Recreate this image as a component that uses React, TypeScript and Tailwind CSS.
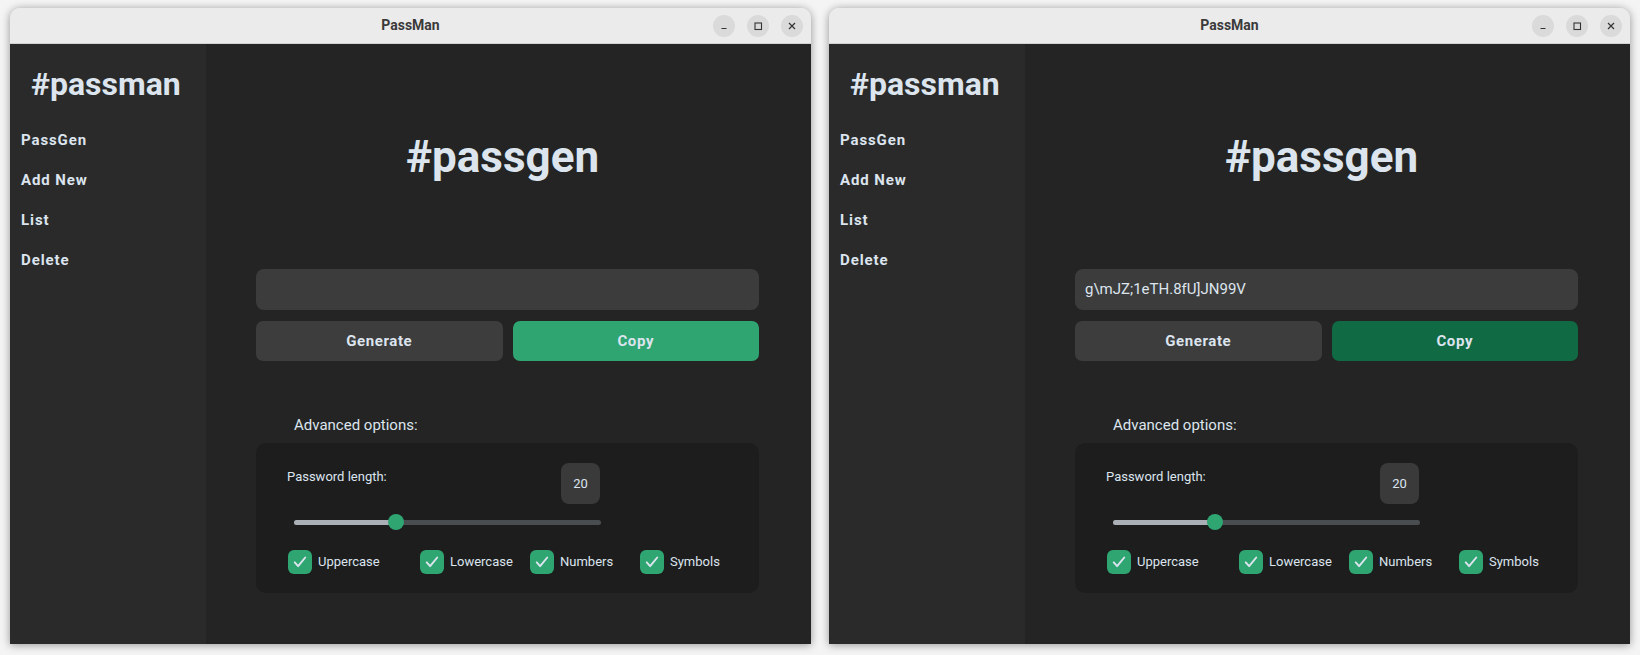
import React from 'react';

interface WindowProps {
  password: string;
  copyPressed?: boolean;
}

const CheckItem: React.FC<{ label: string; width: string }> = ({ label, width }) => (
  <div className={`flex items-center ${width}`}>
    <div className="w-[24px] h-[24px] rounded-[6px] bg-[#2fa572] flex items-center justify-center">
      <svg width="18" height="18" viewBox="0 0 24 24" fill="none">
        <path d="M5 12.5l4.5 5L19 6" stroke="#dce4ee" strokeWidth="2.6" strokeLinecap="round" strokeLinejoin="round" />
      </svg>
    </div>
    <span className="ml-[6px] text-[13px] text-[#dce4ee]">{label}</span>
  </div>
);

const WinButton: React.FC<{ children: React.ReactNode }> = ({ children }) => (
  <div className="w-[22px] h-[22px] rounded-full bg-[#dadada] flex items-center justify-center text-[#333]">
    {children}
  </div>
);

const Window: React.FC<WindowProps> = ({ password, copyPressed }) => {
  return (
    <div className="w-[801px] h-[636px] flex flex-col rounded-t-[10px] overflow-hidden shadow-[0_1px_8px_rgba(0,0,0,0.4)]">
      {/* title bar */}
      <div className="h-[36px] bg-[#ebebeb] border-b border-[#d2d2d2] flex items-center relative">
        <span className="w-full text-center text-[14px] font-bold text-[#3a3a3a] font-['Roboto',sans-serif]">PassMan</span>
        <div className="absolute right-[8px] top-[7px] flex gap-[12px]">
          <WinButton>
            <svg width="10" height="10" viewBox="0 0 10 10"><path d="M2.5 7.5h5" stroke="#333" strokeWidth="1.2" /></svg>
          </WinButton>
          <WinButton>
            <svg width="10" height="10" viewBox="0 0 10 10"><rect x="2" y="2" width="6.5" height="6.5" fill="none" stroke="#333" strokeWidth="1.1" /></svg>
          </WinButton>
          <WinButton>
            <svg width="10" height="10" viewBox="0 0 10 10"><path d="M2 2l6 6M8 2l-6 6" stroke="#333" strokeWidth="1.2" /></svg>
          </WinButton>
        </div>
      </div>

      <div className="flex flex-1 font-['Roboto',sans-serif]">
        {/* sidebar */}
        <div className="w-[196px] bg-[#2a2a2a] pl-[11px] pt-[21px]">
          <h1 className="text-[32px] leading-[38px] font-bold text-[#dce4ee] pl-[10px]">#passman</h1>
          <nav className="mt-[27px] flex flex-col gap-[20px]">
            {['PassGen', 'Add New', 'List', 'Delete'].map((item) => (
              <span key={item} className="text-[15px] leading-[20px] font-bold tracking-[0.06em] text-[#dce4ee]">
                {item}
              </span>
            ))}
          </nav>
        </div>

        {/* main */}
        <div className="flex-1 bg-[#242424] pl-[50px] pr-[52px]">
          <div className="w-[503px] mx-auto">
            <h2 className="mt-[87px] pr-[10px] text-[44px] leading-[52px] font-bold text-[#dce4ee] text-center">#passgen</h2>

            <div className="mt-[86px] h-[41px] rounded-[8px] bg-[#3c3c3c] flex items-center px-[10px] text-[15px] text-[#dce4ee]">
              {password}
            </div>

            <div className="mt-[11px] flex gap-[10px]">
              <button className="flex-1 h-[40px] rounded-[7px] bg-[#3d3d3d] text-[15px] font-bold tracking-[0.04em] text-[#dce4ee]">
                Generate
              </button>
              <button className={`flex-1 h-[40px] rounded-[7px] text-[15px] font-bold tracking-[0.04em] text-[#dce4ee] ${copyPressed ? 'bg-[#106a43]' : 'bg-[#2fa572]'}`}>
                Copy
              </button>
            </div>

            <p className="mt-[55px] pl-[38px] text-[15px] leading-[18px] text-[#dce4ee]">Advanced options:</p>

            <div className="mt-[9px] bg-[#1d1d1d] rounded-[10px] pt-[20px] pb-[19px]">
              <div className="flex items-start">
                <div className="w-[305px] pl-[31px] pt-[6px] text-[13px] leading-[16px] text-[#dce4ee]">Password length:</div>
                <div className="w-[39px] h-[41px] rounded-[8px] bg-[#3a3a3a] flex items-center justify-center text-[13px] text-[#dce4ee]">
                  20
                </div>
              </div>

              <div className="mt-[10px] ml-[38px] w-[307px] h-[16px] flex items-center relative">
                <div className="w-full h-[5px] rounded-full bg-[#4a4d50]" />
                <div className="absolute left-0 top-[5.5px] w-[102px] h-[5px] rounded-full bg-[#aab0b5]" />
                <div className="absolute left-[94px] top-0 w-[16px] h-[16px] rounded-full bg-[#2fa572]" />
              </div>

              <div className="mt-[20px] ml-[32px] flex">
                <CheckItem label="Uppercase" width="w-[132px]" />
                <CheckItem label="Lowercase" width="w-[110px]" />
                <CheckItem label="Numbers" width="w-[110px]" />
                <CheckItem label="Symbols" width="w-[110px]" />
              </div>
            </div>
          </div>
        </div>
      </div>
    </div>
  );
};

export default function App() {
  return (
    <div className="w-[1640px] h-[655px] bg-[#f4f4f4] flex pt-[8px] pl-[10px] gap-[18px]">
      <Window password="" />
      <Window password={'g\\mJZ;1eTH.8fU]JN99V'} copyPressed />
    </div>
  );
}
